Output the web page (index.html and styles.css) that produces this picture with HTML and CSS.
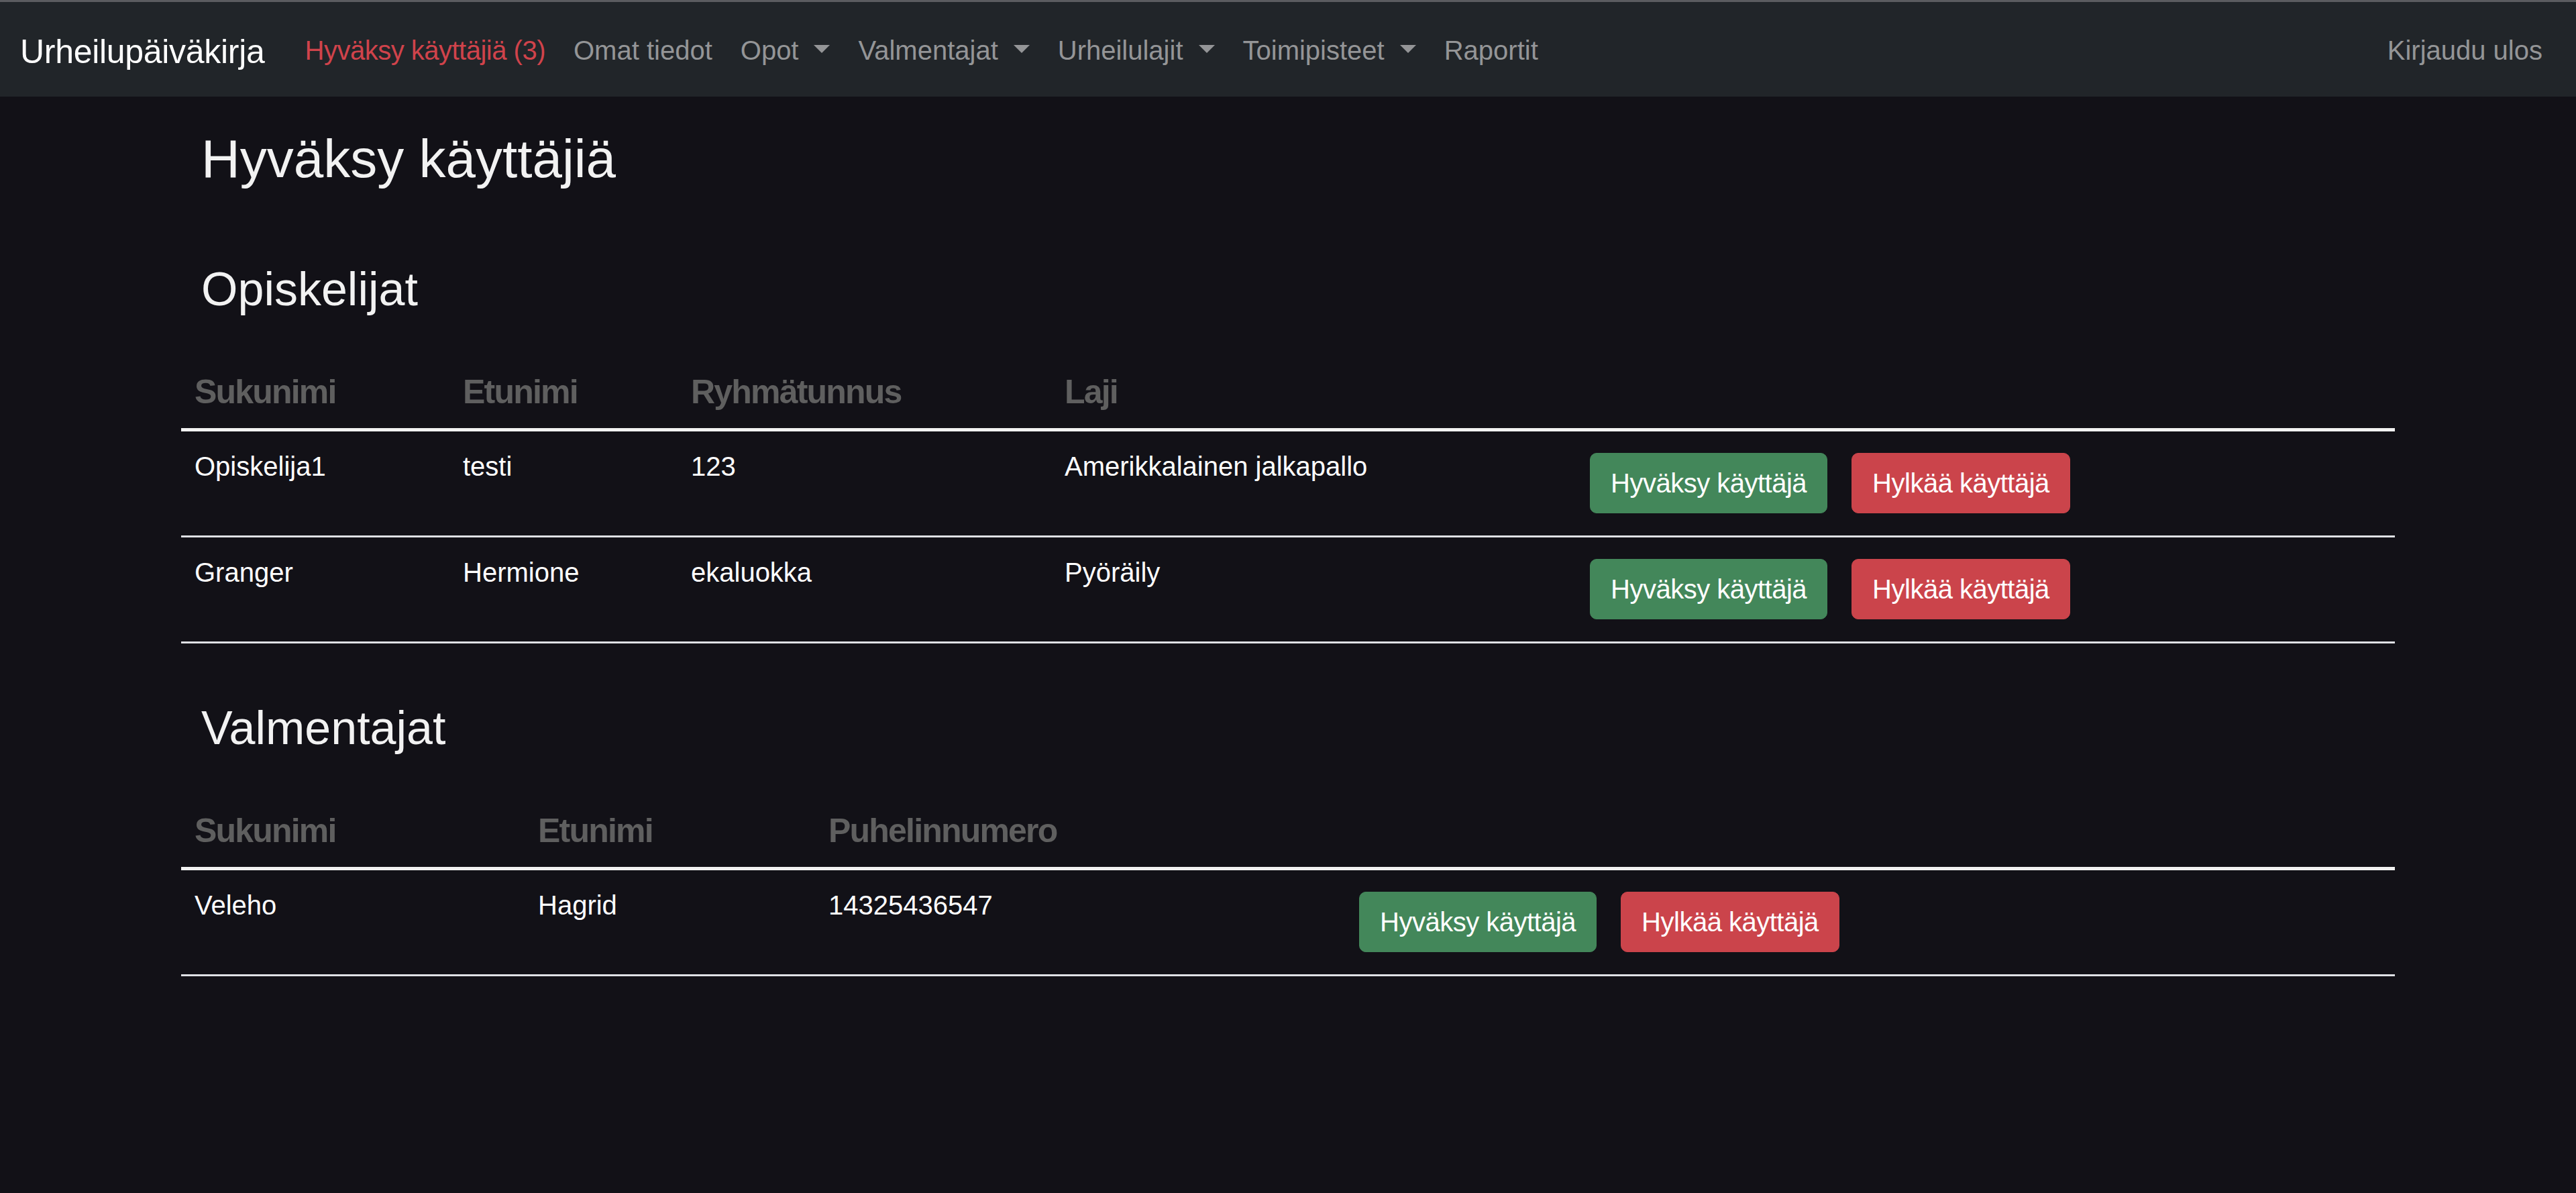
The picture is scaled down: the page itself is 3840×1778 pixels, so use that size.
FILE: index.html
```html
<!DOCTYPE html>
<html lang="fi">
<head>
<meta charset="utf-8">
<title>Hyväksy käyttäjiä</title>
<link rel="stylesheet" href="styles.css">
</head>
<body>
<nav class="navbar">
  <a class="brand" href="#">Urheilupäiväkirja</a>
  <ul class="nav">
    <li><a class="nav-link active" href="#">Hyväksy käyttäjiä (3)</a></li>
    <li><a class="nav-link" href="#">Omat tiedot</a></li>
    <li><a class="nav-link dropdown" href="#">Opot</a></li>
    <li><a class="nav-link dropdown" href="#">Valmentajat</a></li>
    <li><a class="nav-link dropdown" href="#">Urheilulajit</a></li>
    <li><a class="nav-link dropdown" href="#">Toimipisteet</a></li>
    <li><a class="nav-link" href="#">Raportit</a></li>
  </ul>
  <ul class="nav nav-end">
    <li><a class="nav-link" href="#">Kirjaudu ulos</a></li>
  </ul>
</nav>

<main class="container">
  <h2 class="page-title">Hyväksy käyttäjiä</h2>

  <h3 class="section-title first">Opiskelijat</h3>
  <table class="table students">
    <colgroup>
      <col class="c1"><col class="c2"><col class="c3"><col class="c4"><col class="c5">
    </colgroup>
    <thead>
      <tr><th>Sukunimi</th><th>Etunimi</th><th>Ryhmätunnus</th><th>Laji</th><th></th></tr>
    </thead>
    <tbody>
      <tr>
        <td>Opiskelija1</td><td>testi</td><td>123</td><td>Amerikkalainen jalkapallo</td>
        <td class="actions"><div class="btns"><button class="btn btn-success">Hyväksy käyttäjä</button><button class="btn btn-danger">Hylkää käyttäjä</button></div></td>
      </tr>
      <tr>
        <td>Granger</td><td>Hermione</td><td>ekaluokka</td><td>Pyöräily</td>
        <td class="actions"><div class="btns"><button class="btn btn-success">Hyväksy käyttäjä</button><button class="btn btn-danger">Hylkää käyttäjä</button></div></td>
      </tr>
    </tbody>
  </table>

  <h3 class="section-title">Valmentajat</h3>
  <table class="table coaches">
    <colgroup>
      <col class="c1"><col class="c2"><col class="c3"><col class="c4">
    </colgroup>
    <thead>
      <tr><th>Sukunimi</th><th>Etunimi</th><th>Puhelinnumero</th><th></th></tr>
    </thead>
    <tbody>
      <tr>
        <td>Veleho</td><td>Hagrid</td><td>14325436547</td>
        <td class="actions"><div class="btns"><button class="btn btn-success">Hyväksy käyttäjä</button><button class="btn btn-danger">Hylkää käyttäjä</button></div></td>
      </tr>
    </tbody>
  </table>
</main>
</body>
</html>
```

FILE: styles.css
```css
* { box-sizing: border-box; }

html, body {
  margin: 0;
  padding: 0;
}

body {
  background: #121117;
  color: #f2f2f2;
  font-family: "Liberation Sans", Arial, sans-serif;
  font-size: 40px;
  line-height: 1.5;
  min-height: 1778px;
}

/* ---------- navbar ---------- */
.navbar {
  display: flex;
  align-items: center;
  height: 144px;
  padding: 0 29px 0 30px;
  background: #212529;
  border-top: 3px solid #5b5c60;
}

.brand {
  font-size: 50px;
  line-height: 75px;
  padding-top: 8px;
  margin-right: 39px;
  color: #ffffff;
  text-decoration: none;
  letter-spacing: -0.3px;
}

.nav {
  display: flex;
  list-style: none;
  margin: 0;
  padding: 0;
}

.nav-end {
  margin-left: auto;
}

.nav-link {
  display: block;
  padding: 3px 21px 0;
  line-height: 60px;
  color: #949597;
  text-decoration: none;
}

.nav-link.active {
  color: #d0434b;
  letter-spacing: -0.5px;
}

.nav-link.dropdown::after {
  content: "";
  display: inline-block;
  margin-left: 23px;
  vertical-align: 10px;
  border-top: 12px solid #949597;
  border-left: 12px solid transparent;
  border-right: 12px solid transparent;
}

/* ---------- content ---------- */
.container {
  width: 3300px;
  margin: 0 auto;
}

.page-title {
  margin: 45px 0 0;
  padding-left: 30px;
  font-size: 80px;
  line-height: 96px;
  font-weight: 400;
  color: #f2f2f2;
}

.section-title {
  margin: 84px 0 0;
  padding-left: 30px;
  font-size: 70px;
  line-height: 84px;
  font-weight: 400;
  color: #f2f2f2;
}

.section-title.first {
  margin-top: 104px;
}

.table {
  width: 3300px;
  margin-top: 54px;
  border-collapse: collapse;
  table-layout: fixed;
}

.students .c1 { width: 400px; }
.students .c2 { width: 340px; }
.students .c3 { width: 557px; }
.students .c4 { width: 783px; }
.students .c5 { width: 1220px; }

.coaches .c1 { width: 512px; }
.coaches .c2 { width: 433px; }
.coaches .c3 { width: 791px; }
.coaches .c4 { width: 1564px; }

.table th {
  text-align: left;
  font-size: 50px;
  line-height: 75px;
  font-weight: 700;
  letter-spacing: -1.8px;
  color: #5f5f5f;
  padding: 20px 20px 16px;
  border-bottom: 5px solid #f2f2f2;
}

.table td {
  vertical-align: top;
  padding: 22px 20px 0;
  color: #ffffff;
  border-bottom: 3px solid #dfe1e5;
  white-space: nowrap;
}

.table td.actions {
  padding: 32px 20px 33px;
}

.btns {
  display: flex;
  gap: 36px;
}

.btn {
  font-family: inherit;
  font-size: 40px;
  line-height: 60px;
  letter-spacing: -0.5px;
  padding: 14px 30px;
  border-radius: 10px;
  color: #ffffff;
  cursor: pointer;
}

.btn-success {
  background: #43875a;
  border: 1px solid #43875a;
}

.btn-danger {
  background: #cb444b;
  border: 1px solid #cb444b;
}
```
